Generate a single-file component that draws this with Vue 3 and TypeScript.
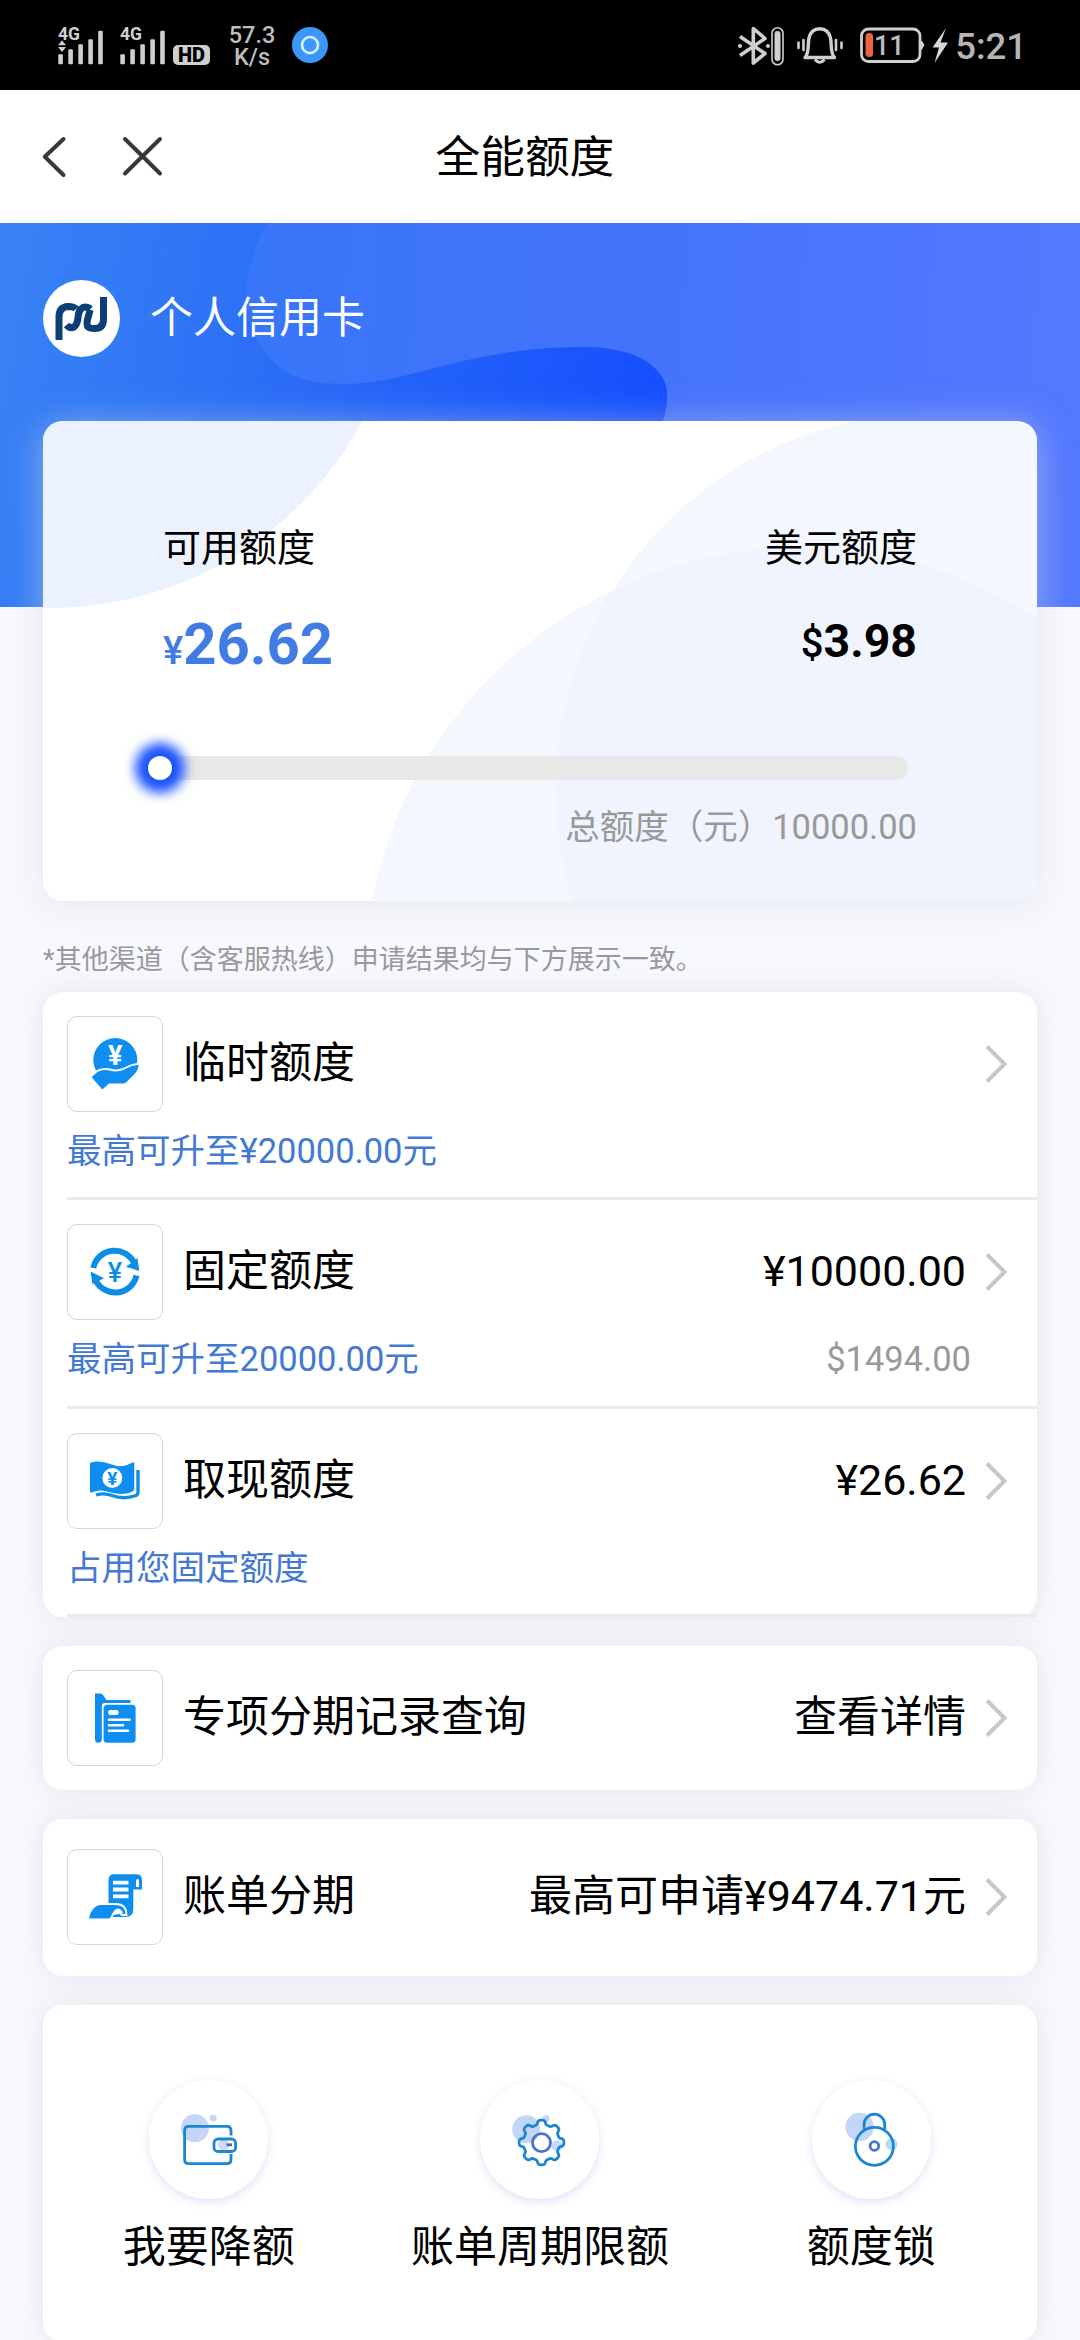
<script setup lang="ts">
interface LimitRow {
  icon: 'hand' | 'cycle' | 'cash'
  title: string
  amount?: string
  hint: string
  usd?: string
}

const limitRows: LimitRow[] = [
  { icon: 'hand', title: '临时额度', hint: '最高可升至¥20000.00元' },
  { icon: 'cycle', title: '固定额度', amount: '¥10000.00', hint: '最高可升至20000.00元', usd: '$1494.00' },
  { icon: 'cash', title: '取现额度', amount: '¥26.62', hint: '占用您固定额度' },
]

const actions = [
  { icon: 'wallet', label: '我要降额' },
  { icon: 'gear', label: '账单周期限额' },
  { icon: 'lock', label: '额度锁' },
]

// Eight soft-edged teeth around a centre point
function gearPath(cx: number, cy: number, base: number, depth: number): string {
  const points: string[] = []
  for (let i = 0; i < 160; i++) {
    const a = (i / 160) * Math.PI * 2
    const r = base + depth * Math.tanh(2.2 * Math.cos(8 * a))
    points.push(`${(cx + r * Math.cos(a)).toFixed(2)} ${(cy + r * Math.sin(a)).toFixed(2)}`)
  }
  return `M${points.join('L')}Z`
}
const gear = gearPath(61.5, 62.5, 20.2, 2.2)
</script>

<template>
  <div class="screen">
    <header class="status">
      <div class="status-left">
        <svg class="signal" width="46" height="40" viewBox="58 26 46 40">
          <text x="58" y="39.500" class="net">4G</text>
          <path d="M58 45.300l4-5 4 5zM58 47l4 5 4-5z" />
          <rect x="58.300" y="54.300" width="4.600" height="10" rx="1" />
          <rect x="68.300" y="49.300" width="4.600" height="15" rx="1" />
          <rect x="78.300" y="44.300" width="4.600" height="20" rx="1" />
          <rect x="88.300" y="39.300" width="4.600" height="25" rx="1" />
          <rect x="98.200" y="30.700" width="4.600" height="33.600" rx="1" />
        </svg>
        <svg class="signal second" width="46" height="40" viewBox="58 26 46 40">
          <text x="58" y="39.500" class="net">4G</text>
          <rect x="58.300" y="54.300" width="4.600" height="10" rx="1" />
          <rect x="68.300" y="49.300" width="4.600" height="15" rx="1" />
          <rect x="78.300" y="44.300" width="4.600" height="20" rx="1" />
          <rect x="88.300" y="39.300" width="4.600" height="25" rx="1" />
          <rect x="98.200" y="30.700" width="4.600" height="33.600" rx="1" />
        </svg>
        <span class="hd">HD</span>
        <span class="speed"><span>57.3</span><span>K/s</span></span>
        <svg class="ring" width="36" height="36" viewBox="0 0 36 36">
          <circle cx="18" cy="18" r="18" fill="#3b97fb" />
          <circle cx="18" cy="18" r="8" fill="none" stroke="#d9f1ff" stroke-width="2.600" />
        </svg>
      </div>
      <div class="status-right">
        <svg width="212" height="42" viewBox="738 24 212 42" fill="none" stroke="#cfcfcf">
          <path d="M741 36.500L766 53.500L754.300 63V28.500L766 38.500L741 55.500" stroke-width="3.600" stroke-linejoin="round" />
          <circle cx="741" cy="46" r="2" fill="#cfcfcf" stroke="none" />
          <circle cx="769" cy="46" r="2" fill="#cfcfcf" stroke="none" />
          <rect x="773" y="27.700" width="11" height="37" rx="5.500" stroke-width="1.600" />
          <rect x="775.500" y="31" width="6" height="30" rx="3" fill="#cfcfcf" stroke="none" />
          <path d="M806 57.500H835.500C831 53 833 45 831.500 38C830 31.500 826 28.800 820.700 28.800S811.500 31.500 810 38C808.500 45 810.500 53 806 57.500Z" stroke-width="3.400" stroke-linejoin="round" />
          <path d="M816 59.500Q820.700 65 825.500 59.500" stroke-width="3.200" />
          <path d="M799.500 42.500V48M804.500 40V50M837 40V50M842.500 42.500V48" stroke-width="2.600" stroke-linecap="round" />
          <rect x="862.500" y="29" width="58.500" height="32.500" rx="7" stroke-width="2.800" />
          <path d="M922.500 41L925 45L922.500 49.500Z" fill="#cfcfcf" />
          <rect x="866.500" y="33" width="7.500" height="24" rx="3.500" fill="#ef6440" stroke="none" />
          <text x="875" y="54.800" class="level">11</text>
          <path d="M947 28L933.500 47.500H940L935.500 63L949 42.500H941.500Z" fill="#d6d6d6" stroke="none" />
        </svg>
        <span class="clock">5:21</span>
      </div>
    </header>

    <nav class="navbar">
      <svg width="122" height="44" viewBox="41 134 122 44" fill="none" stroke="#383838" stroke-width="4" stroke-linecap="round" stroke-linejoin="round">
        <path d="M63.500 138L44.800 155.800L63.500 174" />
        <path d="M125 138L160 172.500M160 138L125 172.500" />
      </svg>
      <h1>全能额度</h1>
    </nav>

    <section class="hero">
      <svg class="hero-bg" width="1080" height="384" viewBox="0 0 1080 384">
        <defs>
          <linearGradient id="deep" gradientUnits="userSpaceOnUse" x1="0" y1="40" x2="670" y2="160">
            <stop offset="0" stop-color="#3882f5" />
            <stop offset=".4" stop-color="#2c6ff6" />
            <stop offset="1" stop-color="#154efe" />
          </linearGradient>
          <linearGradient id="light" gradientUnits="userSpaceOnUse" x1="250" y1="0" x2="1080" y2="60">
            <stop offset="0" stop-color="#3876f8" />
            <stop offset=".45" stop-color="#4373fb" />
            <stop offset="1" stop-color="#5479ff" />
          </linearGradient>
        </defs>
        <rect width="1080" height="384" fill="url(#deep)" />
        <path d="M267 0C240 50 242 90 260 121C278 153 306 161 344 161C410 161 465 124 585 124C640 124 670 148 667 175C667 187 664 195 655 225V384H1080V0Z" fill="url(#light)" />
      </svg>
      <div class="owner">
        <svg class="logo" width="77" height="77" viewBox="0 0 77 77">
          <circle cx="38.500" cy="38.500" r="38.500" fill="#fff" />
          <g fill="none" stroke="#0c3f77" stroke-width="7">
            <path d="M16 60V37Q16 27 25 26.500Q31 26.500 33 29" />
            <path d="M23.500 45Q27 49 31 47C38 42 32 31 40 27.500Q44 26 47.500 29" />
            <path d="M60.500 17V39Q60.500 48.500 51.500 48.500Q44 48.500 44 44C44 38 46 36 47 30" />
          </g>
        </svg>
        <span>个人信用卡</span>
      </div>
    </section>

    <main class="content">
      <section class="quota">
        <svg class="quota-bg" width="994" height="480" viewBox="0 0 994 480">
          <circle cx="7" cy="-167" r="354" fill="#ebf1fe" />
          <circle cx="890" cy="369" r="377.500" fill="#f4f8fe" />
          <circle cx="757" cy="563" r="436" fill="#edf2fd" opacity=".6" />
        </svg>
        <div class="quota-cols">
          <div class="col">
            <span class="caption">可用额度</span>
            <span class="money main"><i>¥</i>26.62</span>
          </div>
          <div class="col end">
            <span class="caption">美元额度</span>
            <span class="money usd"><i>$</i>3.98</span>
          </div>
        </div>
        <div class="track"><span class="knob"></span></div>
        <div class="total">总额度（元）10000.00</div>
      </section>

      <p class="note">*其他渠道（含客服热线）申请结果均与下方展示一致。</p>

      <section class="panel limits">
        <div v-for="row in limitRows" :key="row.title" class="limit">
          <div class="line">
            <span class="icon-box">
              <svg v-if="row.icon === 'hand'" width="96" height="96" viewBox="0 0 96 96" fill="#0d8ef0">
                <circle cx="48.300" cy="44" r="22" />
                <path d="M24.700 61.300L30.500 55.500Q37 53 43 54.500Q50 56.500 56 54Q64 49 71.700 48.500Q71.500 54 67 58.500L59.500 66Q58 67.500 55.500 67.500H42L35.300 73.500Z" />
                <path d="M27 57.500L31 54.500Q37 52 43 53.500Q50 55.500 56 53Q64 48.500 72 47.500" fill="none" stroke="#fff" stroke-width="2" />
                <text x="48.300" y="49" font-size="27" font-weight="700" text-anchor="middle" fill="#fff">¥</text>
              </svg>
              <svg v-else-if="row.icon === 'cycle'" width="96" height="96" viewBox="0 0 96 96" fill="#0d8ee4">
                <path d="M26.300 44A21.800 21.800 0 0 1 67.500 39.500" fill="none" stroke="#0d8ee4" stroke-width="6" />
                <path d="M59 42.700L72.300 47L70.500 34Z" />
                <path d="M69.500 51.500A21.800 21.800 0 0 1 28.500 56" fill="none" stroke="#0d8ee4" stroke-width="6" />
                <path d="M37 54.300L23.500 47.500L25.500 60Z" />
                <text x="48" y="57.500" font-size="27" font-weight="500" text-anchor="middle">¥</text>
              </svg>
              <svg v-else width="96" height="96" viewBox="0 0 96 96" fill="#0d8ef0">
                <path d="M23 30.500Q23 29.500 25 29.200C34 27 43 31.500 50 33Q58 34 65.500 29.500Q67.300 28.700 67.300 30.500V56Q67.300 58 65 58.800C56 63 45 60 40 58.500Q32 56 25.500 59.300Q23 60.500 23 58Z" />
                <circle cx="45.300" cy="45" r="10" fill="#fff" />
                <text x="45.300" y="52" font-size="19" font-weight="700" text-anchor="middle">¥</text>
                <path d="M29 62Q37 59.500 45 62.500C53 65.500 62 65 69 62.500Q71 61.500 71 59V37" fill="none" stroke="#0d8ee4" stroke-width="3.400" />
              </svg>
            </span>
            <span class="title">{{ row.title }}</span>
            <span class="value">{{ row.amount }}</span>
            <svg class="chevron" width="24" height="40" viewBox="0 0 24 40"><path d="M3 2.500L20.500 20L3 37.500" /></svg>
          </div>
          <div class="hint"><span>{{ row.hint }}</span><span class="hint-usd">{{ row.usd }}</span></div>
        </div>
      </section>

      <section class="panel single">
        <div class="line">
          <span class="icon-box">
            <svg width="96" height="96" viewBox="0 0 96 96" fill="#0d8ef0">
              <path d="M28 23.500H33.500Q35 23.500 36 25L39.500 30H63.500V33H38Q34.800 33 34.800 36V70Q34.500 72.500 31.500 72.700Q28 72.500 28 69.500Z" />
              <rect x="36.600" y="34.700" width="32" height="38" rx="3.500" />
              <rect x="41.200" y="40" width="10.400" height="5" rx="2" fill="#fff" />
              <path d="M42 49.700H62.500M42 55.200H56M42 60.700H61" stroke="#fff" stroke-width="2.600" stroke-linecap="round" />
            </svg>
          </span>
          <span class="title">专项分期记录查询</span>
          <span class="value">查看详情</span>
          <svg class="chevron" width="24" height="40" viewBox="0 0 24 40"><path d="M3 2.500L20.500 20L3 37.500" /></svg>
        </div>
      </section>

      <section class="panel single tall">
        <div class="line">
          <span class="icon-box">
            <svg width="96" height="96" viewBox="0 0 96 96" fill="#0d8ef0">
              <path d="M41.500 54V31Q41.500 25.300 47 25.300H69Q75 25.300 75 31V40.500H66.300V60Q66.300 68 58.500 68H44V54Z" />
              <path d="M69 38V32.500Q69 29.500 71 30Q72.500 30.500 72 33V38Z" fill="#fff" />
              <path d="M46 33.700H61.500M46 40.500H61.500M46 47.300H61.500" stroke="#fff" stroke-width="3.800" />
              <path d="M20.800 70.500C22 62 27 55 34 55H49C57 55 59.500 60 59.500 66H55C52 62 47 62 45.500 66Q44.500 70.500 41 70.500Z" stroke="#fff" stroke-width="1.800" />
              <path d="M45.500 66.200Q46.500 60 51 59.500Q54.500 60 56 64Z" fill="#fff" />
            </svg>
          </span>
          <span class="title">账单分期</span>
          <span class="value">最高可申请¥9474.71元</span>
          <svg class="chevron" width="24" height="40" viewBox="0 0 24 40"><path d="M3 2.500L20.500 20L3 37.500" /></svg>
        </div>
      </section>

      <section class="panel actions">
        <div v-for="item in actions" :key="item.label" class="action">
          <span class="bubble">
            <svg v-if="item.icon === 'wallet'" width="119" height="119" viewBox="0 0 119 119" fill="none" stroke="#1a87d0" stroke-width="2.800">
              <circle cx="45.900" cy="48.300" r="14" fill="#c5d5f7" stroke="none" />
              <circle cx="64.200" cy="38" r="3.600" fill="#c9d4f6" stroke="none" />
              <path d="M82 55.500V50.500Q82 46.300 78 46.300H39.500Q35.600 46.300 35.600 50.500V79.500Q35.600 83.700 39.500 83.700H78Q82 83.700 82 79.500V74" />
              <circle cx="74.500" cy="65" r="5.500" fill="#d0daf8" stroke="none" />
              <rect x="65" y="59" width="21.600" height="12.500" rx="4" />
              <path d="M77.500 64.800H83" stroke="#4567bd" />
            </svg>
            <svg v-else-if="item.icon === 'gear'" width="119" height="119" viewBox="0 0 119 119" fill="none" stroke="#1a87d0" stroke-width="2.800">
              <circle cx="46.200" cy="49.300" r="14" fill="#c5d5f7" stroke="none" />
              <circle cx="66" cy="38.500" r="3.600" fill="#c9d4f6" stroke="none" />
              <circle cx="77" cy="65.700" r="5.500" fill="#c5d9f8" stroke="none" />
              <path :d="gear" stroke-linejoin="round" />
              <circle cx="61.500" cy="62.700" r="9" stroke="#4b74cb" />
            </svg>
            <svg v-else width="119" height="119" viewBox="0 0 119 119" fill="none" stroke="#1a87d0" stroke-width="2.800">
              <circle cx="47.600" cy="47" r="14.200" fill="#c5d5f7" stroke="none" />
              <circle cx="79.500" cy="64.300" r="6" fill="#b9dbf8" stroke="none" />
              <circle cx="62.400" cy="66.300" r="19" />
              <path d="M52.100 49V44.500A10.300 10.300 0 0 1 72.700 44.500V49" />
              <circle cx="62.400" cy="66" r="4.300" stroke="#4b74cb" />
            </svg>
          </span>
          <span class="action-label">{{ item.label }}</span>
        </div>
      </section>
    </main>
  </div>
</template>

<style>
body {
  background: #f8f9fe;
  overflow: hidden;
}
</style>

<style scoped>
.screen {
  width: 1080px;
  height: 2340px;
  overflow: hidden;
  background: #f8f9fe;
  color: #000;
  font-family: Roboto, "Noto Sans CJK SC", sans-serif;
}
.screen * { box-sizing: border-box; }
svg { display: block; flex: none; overflow: visible; }

.status {
  height: 90px;
  background: #000;
  display: flex;
  justify-content: space-between;
  padding: 0 53px 0 58px;
}
.status-left, .status-right { display: flex; align-items: center; }
.signal { fill: #cfcfcf; margin-top: 2px; }
.signal.second { margin-left: 16px; }
.net { font-size: 17.500px; font-weight: 700; }
.hd {
  width: 37px;
  height: 20px;
  margin: 20px 0 0 7px;
  border-radius: 5px;
  background: #cfcfcf;
  color: #000;
  font-size: 20px;
  line-height: 20px;
  font-weight: 900;
  text-align: center;
}
.speed {
  display: flex;
  flex-direction: column;
  align-items: center;
  width: 50px;
  margin: 2px 0 0 17px;
  font-size: 23.500px;
  line-height: 22.500px;
  font-weight: 500;
  color: #bdbdbd;
}
.ring { margin-left: 15px; }
.level { font-size: 27px; font-weight: 500; fill: #bdbdbd; stroke: none; }
.clock { margin: 3px 0 0 6px; font-size: 36.500px; font-weight: 500; color: #b5b5b5; line-height: 42px; }

.navbar {
  height: 133px;
  background: #fff;
  display: flex;
  align-items: center;
  padding-left: 41px;
}
.navbar h1 {
  margin: 3px 0 0 272.500px;
  font-size: 44.700px;
  line-height: 60px;
  font-weight: 400;
}

.hero { height: 384px; position: relative; }
.hero-bg { position: absolute; left: 0; top: 0; }
.owner {
  position: relative;
  display: flex;
  align-items: center;
  padding: 57px 0 0 43px;
  color: #fff;
  font-size: 43px;
  line-height: 60px;
}
.owner span { margin: -2px 0 0 30px; }

.content {
  position: relative;
  margin-top: -186px;
  padding: 0 43px;
}
.quota {
  position: relative;
  height: 480px;
  border-radius: 20px;
  background: #fff;
  box-shadow: 0 4px 36px rgba(214, 217, 224, .55);
  padding: 100px 120px 0;
}
.quota-bg { position: absolute; left: 0; top: 0; border-radius: 20px; overflow: hidden; }
.quota-cols { position: relative; display: flex; justify-content: space-between; height: 235px; }
.col { display: flex; flex-direction: column; }
.col.end { align-items: flex-end; }
.caption { font-size: 38px; line-height: 54px; }
.money { font-weight: 700; line-height: 70px; }
.money i { font-style: normal; font-size: 38px; }
.money.main { margin-top: 34px; font-size: 58px; color: #417ce5; }
.money.main i { font-weight: 500; }
.money.usd { margin-top: 31px; font-size: 46.500px; }
.money.usd i { font-size: 40px; font-weight: 500; }
.track {
  position: relative;
  width: 761px;
  height: 24px;
  margin-left: -16px;
  border-radius: 12px;
  background: #e8e8e8;
}
.knob {
  position: absolute;
  left: 1px;
  top: 0;
  width: 24px;
  height: 24px;
  border-radius: 50%;
  background: #fff;
  box-shadow: 0 0 12px 13px #1953fb;
}
.total {
  position: relative;
  margin-top: 22px;
  text-align: right;
  font-size: 34.500px;
  line-height: 50px;
  color: #999;
}
.note {
  margin: 39px 0 0;
  font-size: 27px;
  line-height: 40px;
  color: #999;
}
.panel {
  background: #fff;
  border-radius: 20px;
  box-shadow: 0 0 28px rgba(190, 192, 200, .35);
}
.limits { margin-top: 12px; height: 625px; }
.limit {
  height: 208.330px;
  margin-left: 24px;
  padding-top: 24px;
  border-bottom: 3px solid #ebebed;
}
.line { display: flex; align-items: center; height: 96px; padding-right: 29px; }
.icon-box {
  width: 96px;
  height: 96px;
  border: 1px solid #d6d6d8;
  border-radius: 10px;
  flex: none;
}
.icon-box svg { margin: -1px; }
.title, .value { font-size: 43px; line-height: 60px; margin-top: -2px; white-space: nowrap; }
.title { margin-left: 20px; }
.value { margin-left: auto; margin-right: 18px; }
.chevron { fill: none; stroke: #c8c8ca; stroke-width: 4; }
.hint {
  display: flex;
  justify-content: space-between;
  margin-top: 14px;
  padding-right: 66px;
  font-size: 34.500px;
  line-height: 50px;
  color: #4379d3;
}
.hint-usd { color: #999; }
.single { margin-top: 29px; height: 144px; padding: 24px 0 0 24px; }
.single.tall { height: 157px; padding-top: 30px; }
.actions { margin-top: 29px; height: 337px; display: flex; padding-top: 75px; }
.action { flex: 1; display: flex; flex-direction: column; align-items: center; }
.bubble {
  width: 119px;
  height: 119px;
  border-radius: 50%;
  box-shadow: 0 3px 10px rgba(180, 180, 235, .4);
}
.action-label { margin-top: 18px; font-size: 43px; line-height: 60px; }
</style>
